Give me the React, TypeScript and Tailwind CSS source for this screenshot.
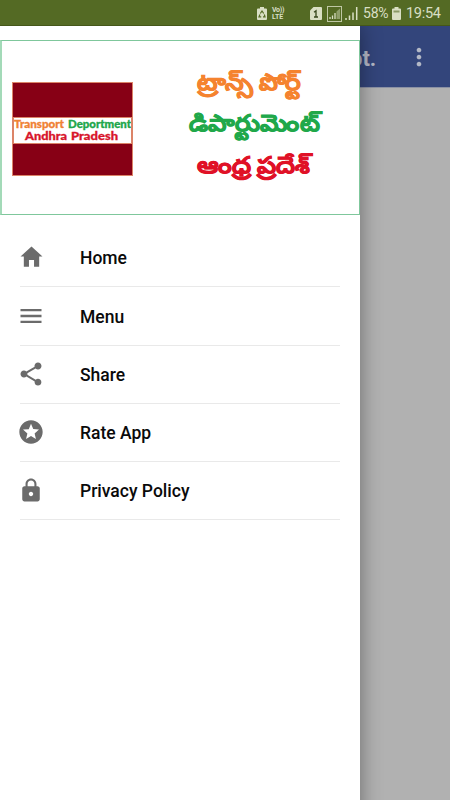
import type { ReactNode } from "react";
import { IoMdHome, IoMdLock, IoMdMenu, IoMdShare } from "react-icons/io";
import { MdMoreVert, MdStars } from "react-icons/md";

const menuItems: { label: string; icon: ReactNode }[] = [
  { label: "Home", icon: <IoMdHome size={27} className="mb-[2px]" /> },
  { label: "Menu", icon: <IoMdMenu size={28} /> },
  { label: "Share", icon: <IoMdShare size={28} /> },
  { label: "Rate App", icon: <MdStars size={28} className="mb-px" /> },
  { label: "Privacy Policy", icon: <IoMdLock size={28} className="mb-px" /> },
];

const StatusBar = () => (
  <div className="relative z-20 flex h-[26px] shrink-0 items-center bg-[#546a24] pt-px pr-[9px] text-[#d9dfc4] shadow-[inset_0_-1px_0_#455719]">
    <svg className="ml-auto" width="10" height="13" viewBox="0 0 10 13">
      <path d="M3 0h4v1.500h2q1 0 1 1V12q0 1-1 1H1q-1 0-1-1V2.500q0-1 1-1h2z" fill="currentColor" />
      <path d="M3.300 6.500 5 4l1.700 2.500M7.300 7.500l.7 2.300H6M4.200 9.800H2l.9-2.300" fill="none" stroke="#546a24" strokeWidth="1.200" />
    </svg>
    <div className="ml-[5px] w-[15px] text-[7px] leading-[7px] font-bold">
      <div className="tracking-[-0.300px] whitespace-nowrap">Vo))</div>
      <div>LTE</div>
    </div>
    <svg className="ml-[23px]" width="12" height="13" viewBox="0 0 12 13">
      <path d="M3.500 0H11q1 0 1 1v11q0 1-1 1H1q-1 0-1-1V3.500z" fill="currentColor" />
      <path d="M4 5.200 6 3.800V10M4 10h4" fill="none" stroke="#35451a" strokeWidth="1.300" />
    </svg>
    <svg className="ml-[5px]" width="15" height="16" viewBox="0 0 15 16">
      <rect x=".5" y=".5" width="14" height="15" fill="none" stroke="currentColor" strokeOpacity=".8" />
      <path d="M3 13v-2M5.500 13V9.500M8 13V7" stroke="currentColor" strokeWidth="1.300" />
      <path d="M9.500 13V5.500L13 2.500V13z" fill="currentColor" fillOpacity=".45" />
    </svg>
    <svg className="ml-[3px]" width="13" height="13" viewBox="0 0 13 13">
      <path d="M1 13v-2M4.500 13V8.500M8 13V5.500M11.700 13V0" stroke="currentColor" strokeWidth="1.500" />
    </svg>
    <span className="ml-[5px] w-[26px] text-[14px] tracking-[-0.200px]">58%</span>
    <svg className="ml-[3px]" width="9" height="13" viewBox="0 0 9 13">
      <path d="M2.500 0h4v1.500H8q1 0 1 1V12q0 1-1 1H1q-1 0-1-1V2.500q0-1 1-1h1.500z" fill="currentColor" />
      <path d="M1.500 3.500h6v2h-6z" fill="#8b9a67" />
    </svg>
    <span className="ml-[5px] w-[35px] text-[14.500px] tracking-[-0.300px]">19:54</span>
  </div>
);

const Banner = () => (
  <div className="mt-[14px] flex h-[175px] items-start border border-l-2 border-[#7fc79c] border-l-[#a3dab8]">
    <div className="mt-[41px] ml-[9.500px] flex h-[94px] w-[121px] shrink-0 flex-col border border-[#dc8468] bg-[#870015] pt-[34px]">
      <div className="flex h-[27px] flex-col items-center border border-[#dc8468] bg-white">
        <svg className="block" width="117" height="25" viewBox="0 0 117 25">
          <g fontFamily="Lato, sans-serif" fontWeight="900" fontSize="10.500" strokeWidth=".3">
            <text x="0" y="9.500" textLength="50" lengthAdjust="spacingAndGlyphs" fill="#f08234" stroke="#f08234">Transport</text>
            <text x="54" y="9.500" textLength="63" lengthAdjust="spacingAndGlyphs" fill="#20a64a" stroke="#20a64a">Deportment</text>
            <text x="11" y="22" textLength="42" lengthAdjust="spacingAndGlyphs" fontSize="11.500" fill="#d8152b" stroke="#d8152b">Andhra</text>
            <text x="57" y="22" textLength="47" lengthAdjust="spacingAndGlyphs" fontSize="11.500" fill="#d8152b" stroke="#d8152b">Pradesh</text>
          </g>
        </svg>
      </div>
    </div>
    <svg className="mt-[20px] ml-[54px] block" width="140" height="130" viewBox="0 0 140 130">
      <g fontSize="23" fontWeight="700" strokeWidth=".7">
        <text x="10" y="29" textLength="104" lengthAdjust="spacingAndGlyphs" fill="#f5832f" stroke="#f5832f">ట్రాన్స్ పోర్ట్</text>
        <text x="2" y="70" textLength="131" lengthAdjust="spacingAndGlyphs" fill="#20a84a" stroke="#20a84a">డిపార్టుమెంట్</text>
        <text x="10" y="112" textLength="113" lengthAdjust="spacingAndGlyphs" fill="#e01127" stroke="#e01127">ఆంధ్ర ప్రదేశ్</text>
      </g>
    </svg>
  </div>
);

export default function App() {
  return (
    <div className="flex h-[800px] w-[450px] flex-col overflow-hidden bg-[#b1b1b1] font-[Roboto,'Noto_Sans',sans-serif]">
      <StatusBar />
      <div className="flex min-h-0 flex-1">
        <nav className="z-10 -mb-8 w-[360px] shrink-0 bg-white shadow-[0_0_20px_rgba(0,0,0,0.4)]">
          <Banner />
          <ul className="mt-[14px]">
            {menuItems.map((item) => (
              <li key={item.label} className="mx-5 flex h-[58.300px] items-center border-b border-[#e9e9e9]">
                <span className="flex w-[22px] justify-center text-[#6b6b6b] [&>svg]:shrink-0">{item.icon}</span>
                <span className="ml-[38px] pt-[1.500px] text-[17.500px] font-medium text-[#0a0a0a]">{item.label}</span>
              </li>
            ))}
          </ul>
        </nav>
        <div className="min-w-0 flex-1">
          <header className="flex h-[62px] items-center border-b border-[#8b91a4] bg-[#33457b] text-[#b3b8c6]">
            <span className="-ml-[10px] w-[58px] pt-[4px] text-[22px] font-bold">pt.</span>
            <MdMoreVert size={28} className="-ml-[3px]" />
          </header>
        </div>
      </div>
    </div>
  );
}
